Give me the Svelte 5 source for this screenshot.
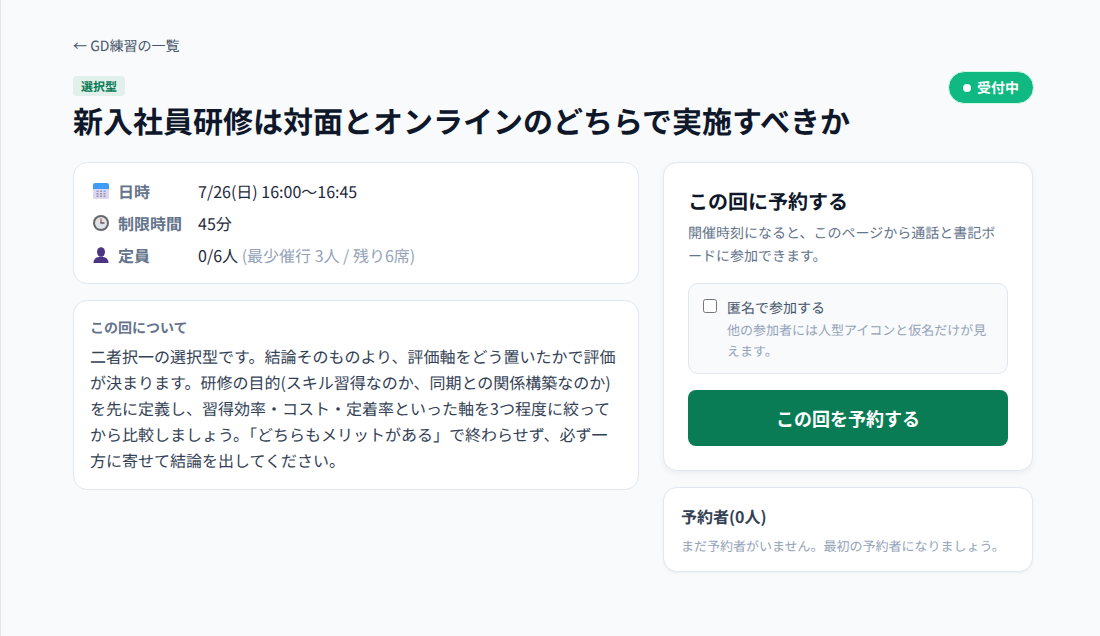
<script>
  const rows = [
    { icon: 'cal', label: '日時', value: '7/26(日) 16:00〜16:45' },
    { icon: 'clock', label: '制限時間', value: '45分' },
    { icon: 'user', label: '定員', value: '0/6人', note: '(最少催行 3人 / 残り6席)' }
  ];
</script>

<div class="page">
  <main class="wrap">
    <a class="back" href="#top">← GD練習の一覧</a>
    <header class="head">
      <div>
        <span class="tag">選択型</span>
        <h1>新入社員研修は対面とオンラインのどちらで実施すべきか</h1>
      </div>
      <span class="status"><i></i>受付中</span>
    </header>
    <div class="cols">
      <div class="col">
        <section class="card info">
          {#each rows as r}
            <div class="row">
              <span class="ico">
                {#if r.icon === 'cal'}
                  <svg viewBox="0 0 16 16" width="16" height="16">
                    <path d="M0 6h16v8.500a1.500 1.500 0 0 1-1.500 1.500h-13A1.500 1.500 0 0 1 0 14.500z" fill="#dcd6ee"/>
                    <path d="M2 0h12a2 2 0 0 1 2 2v4H0V2a2 2 0 0 1 2-2z" fill="#3f9cf5"/>
                    <g fill="#9a93b5">
                      <rect x="3.500" y="7.500" width="2" height="1.500"/><rect x="7" y="7.500" width="2" height="1.500"/><rect x="10.500" y="7.500" width="2" height="1.500" fill="#6fa8ee"/>
                      <rect x="3.500" y="10" width="2" height="1.500"/><rect x="7" y="10" width="2" height="1.500"/><rect x="10.500" y="10" width="2" height="1.500"/>
                      <rect x="3.500" y="12.500" width="2" height="1.500"/><rect x="7" y="12.500" width="2" height="1.500"/><rect x="10.500" y="12.500" width="2" height="1.500"/>
                    </g>
                  </svg>
                {:else if r.icon === 'clock'}
                  <svg viewBox="0 0 16 16" width="16" height="16">
                    <circle cx="8" cy="8" r="8" fill="#64686d"/>
                    <circle cx="8" cy="8" r="6" fill="#dfe2e6"/>
                    <path d="M8 3.500V8" stroke="#b5522f" stroke-width="1.200"/>
                    <path d="M7.400 8h4.100" stroke="#3c4043" stroke-width="1.200"/>
                  </svg>
                {:else}
                  <svg viewBox="0 0 16 16" width="16" height="16">
                    <ellipse cx="8" cy="5" rx="4" ry="4.800" fill="#4b3480"/>
                    <path d="M.5 16c0-4.200 2.900-6.200 7.500-6.200s7.500 2 7.500 6.200z" fill="#4b3480"/>
                  </svg>
                {/if}
              </span>
              <span class="label">{r.label}</span>
              <span class="value">{r.value}{#if r.note}{' '}<span class="note">{r.note}</span>{/if}</span>
            </div>
          {/each}
        </section>
        <section class="card about">
          <h2>この回について</h2>
          <p>二者択一の選択型です。結論そのものより、評価軸をどう置いたかで評価が決まります。研修の目的(スキル習得なのか、同期との関係構築なのか)を先に定義し、習得効率・コスト・定着率といった軸を3つ程度に絞ってから比較しましょう。「どちらもメリットがある」で終わらせず、必ず一方に寄せて結論を出してください。</p>
        </section>
      </div>
      <div class="col">
        <section class="card book">
          <h2>この回に予約する</h2>
          <p class="lead">開催時刻になると、このページから通話と書記ボードに参加できます。</p>
          <label class="anon">
            <input type="checkbox" />
            <span>
              <span class="anon-title">匿名で参加する</span>
              <span class="anon-note">他の参加者には人型アイコンと仮名だけが見えます。</span>
            </span>
          </label>
          <button type="button">この回を予約する</button>
        </section>
        <section class="card people">
          <h2>予約者(0人)</h2>
          <p>まだ予約者がいません。最初の予約者になりましょう。</p>
        </section>
      </div>
    </div>
  </main>
</div>

<style>
  :global(body) {
    margin: 0;
    font-family: "Noto Sans CJK JP", "Noto Sans", sans-serif;
    background: #f8fafc;
    text-rendering: geometricPrecision;
  }
  .page {
    min-height: 636px;
    box-sizing: border-box;
    border-left: 1px solid #e5e7eb;
    background: #f8fafc;
  }
  .wrap {
    width: 960px;
    margin-left: 72px;
    padding-top: 36px;
  }
  .back {
    display: block;
    font-size: 14px;
    line-height: 20px;
    color: #475569;
    text-decoration: none;
  }
  .head {
    display: flex;
    justify-content: space-between;
    align-items: flex-start;
    margin-top: 20px;
  }
  .tag {
    display: block;
    width: fit-content;
    font-size: 12px;
    font-weight: 700;
    line-height: 19px;
    padding: 1px 8px 0;
    border-radius: 4px;
    background: #e1f0eb;
    color: #0a7c55;
  }
  h1 {
    margin: 4px 0 0;
    font-size: 30px;
    line-height: 40px;
    font-weight: 700;
    color: #0f172a;
  }
  .status {
    display: flex;
    align-items: center;
    gap: 6px;
    box-sizing: border-box;
    height: 33px;
    padding: 0 14px;
    border: 1px solid #d1fae5;
    border-radius: 17px;
    background: #10b981;
    color: #fff;
    font-size: 14px;
    line-height: 22px;
    font-weight: 700;
    margin: -5px -1px 0 0;
  }
  .status b {
    font-weight: 700;
  }
  .status i {
    width: 8px;
    height: 8px;
    border-radius: 50%;
    background: #fff;
  }
  .cols {
    display: grid;
    grid-template-columns: 566px 370px;
    gap: 24px;
    margin-top: 22px;
  }
  .col {
    display: flex;
    flex-direction: column;
    gap: 16px;
  }
  .card {
    background: #fff;
    border: 1px solid #e2e8f0;
    border-radius: 14px;
    box-sizing: border-box;
  }
  .info {
    padding: 12px 17px 12px 18px;
  }
  .row {
    display: flex;
    align-items: center;
    height: 32px;
    font-size: 16px;
    color: #1e293b;
  }
  .ico {
    width: 17px;
    margin-right: 8px;
    padding-left: 1px;
    display: flex;
    align-items: center;
  }
  .label {
    width: 80px;
    font-weight: 700;
    color: #64748b;
  }
  .note {
    color: #94a3b8;
  }
  .about {
    padding: 17px 16px 16px;
  }
  .about h2 {
    margin: 0;
    font-size: 14px;
    line-height: 20px;
    font-weight: 700;
    color: #64748b;
  }
  .about p {
    margin: 5px 0 0;
    font-size: 16px;
    line-height: 26px;
    color: #334155;
  }
  .book {
    padding: 25px 24px 24px;
    box-shadow: 0 2px 6px rgba(15, 23, 42, 0.06);
  }
  .book h2 {
    margin: 0;
    font-size: 20px;
    line-height: 26px;
    font-weight: 700;
    color: #0f172a;
  }
  .lead {
    margin: 8px 0 0;
    font-size: 14px;
    line-height: 23px;
    color: #64748b;
  }
  .anon {
    display: flex;
    align-items: flex-start;
    gap: 10px;
    margin-top: 15px;
    padding: 14px 14px 12px;
    border: 1px solid #e2e8f0;
    border-radius: 10px;
    background: #f8fafc;
  }
  .anon input {
    flex: none;
    width: 14px;
    height: 14px;
    margin: 1px 0 0;
  }
  .anon-title {
    display: block;
    font-size: 14px;
    line-height: 21px;
    color: #475569;
  }
  .anon-note {
    display: block;
    font-size: 13px;
    line-height: 21px;
    color: #94a3b8;
  }
  button {
    display: block;
    width: 100%;
    height: 56px;
    margin-top: 16px;
    border: 0;
    border-radius: 8px;
    background: #0a7c55;
    color: #fff;
    font: 700 18px "Noto Sans CJK JP", sans-serif;
  }
  .people {
    padding: 16px 17px 15px;
    box-shadow: 0 1px 3px rgba(15, 23, 42, 0.05);
  }
  .people h2 {
    margin: 0;
    font-size: 16px;
    line-height: 24px;
    font-weight: 700;
    color: #334155;
  }
  .people p {
    margin: 8px 0 0;
    font-size: 13px;
    line-height: 20px;
    color: #94a3b8;
  }
</style>
